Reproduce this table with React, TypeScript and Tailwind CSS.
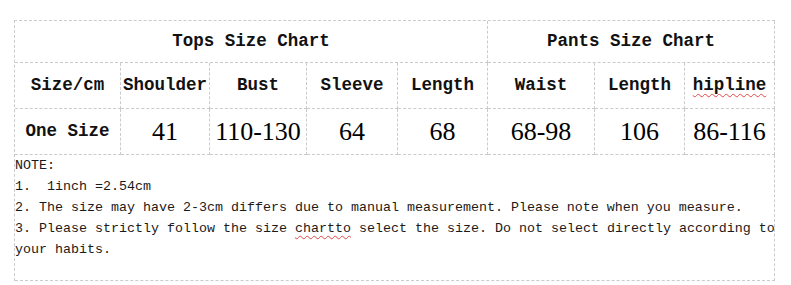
import React from 'react';

const mono = "font-['Liberation_Mono',monospace]";
const serif = "font-['Liberation_Serif',serif]";
const cell = 'flex items-center justify-center border-r border-b border-dashed border-[#cbcbcb]';

const headers = ['Size/cm', 'Shoulder', 'Bust', 'Sleeve', 'Length', 'Waist', 'Length', 'hipline'];
const values = ['41', '110-130', '64', '68', '68-98', '106', '86-116'];

const App: React.FC = () => {
  return (
    <div className="w-[791px] h-[285px] bg-white text-[#111]">
      <div className="pl-[14px] pt-[20px]">
        <div className="grid w-[761px] grid-cols-[106px_89px_97px_91px_90px_107px_90px_90px] border-l border-t border-dashed border-[#cbcbcb]">
          {/* Title row */}
          <div className={`${cell} col-span-5 h-[42px] ${mono} text-[17.5px] font-bold`}>
            Tops Size Chart
          </div>
          <div className={`${cell} col-span-3 h-[42px] ${mono} text-[17.5px] font-bold`}>
            Pants Size Chart
          </div>

          {/* Header row */}
          {headers.map((h, i) => (
            <div key={i} className={`${cell} h-[46px] ${mono} text-[17.5px] font-bold`}>
              {h === 'hipline' ? (
                <span className="underline decoration-wavy decoration-[#e04848] decoration-1 underline-offset-[3px]">{h}</span>
              ) : (
                h
              )}
            </div>
          ))}

          {/* Values row */}
          <div className={`${cell} h-[46px] ${mono} text-[17.5px] font-bold`}>One Size</div>
          {values.map((v, i) => (
            <div key={i} className={`${cell} h-[46px] ${serif} text-[26px] text-black`}>
              {v}
            </div>
          ))}

          {/* Notes */}
          <div className={`col-span-8 h-[126px] border-r border-b border-dashed border-[#cbcbcb] ${mono} text-[13.33px] leading-[21px] text-[#1a1a1a] whitespace-pre`}>
            <div>NOTE:</div>
            <div>1.  1inch =2.54cm</div>
            <div>2. The size may have 2-3cm differs due to manual measurement. Please note when you measure.</div>
            <div>
              3. Please strictly follow the size{' '}
              <span className="underline decoration-wavy decoration-[#e04848] decoration-1 underline-offset-[3px]">chartto</span>
              {' '}select the size. Do not select directly according to
            </div>
            <div>your habits.</div>
          </div>
        </div>
      </div>
    </div>
  );
};

export default App;
